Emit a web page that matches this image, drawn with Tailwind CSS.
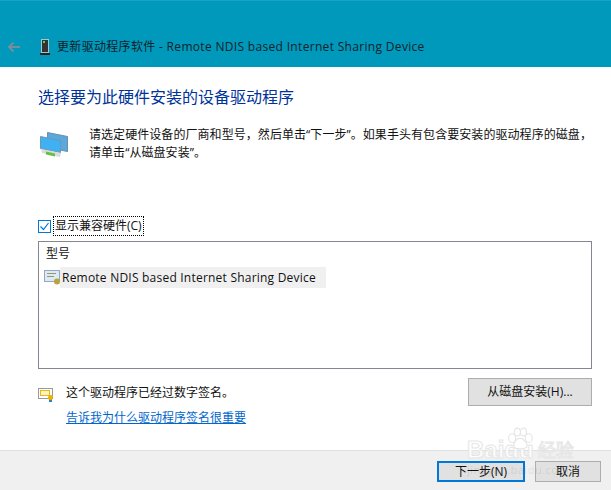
<!DOCTYPE html>
<html lang="zh-CN">
<head>
    <meta charset="UTF-8">
    <title>更新驱动程序软件</title>
    <script src="https://cdn.jsdelivr.net/npm/@tailwindcss/browser@4"></script>
</head>
<body class="bg-white overflow-hidden">
    <div class="relative w-[611px] h-[490px] flex flex-col text-[12px] leading-[16px] text-[#111] font-['Open_Sans','Noto_Sans_CJK_SC',sans-serif]">
        <!-- title bar -->
        <header class="h-[67px] bg-[#0099bc] border-t border-[#1aa3c4] flex items-end pb-[12px] pl-[7px] shrink-0">
            <svg width="14" height="12" viewBox="0 0 14 12" class="mb-[2px]">
                <path d="M13 6H2M6.5 1.5L2 6l4.5 4.5" fill="none" stroke="#72909c" stroke-width="2"/>
            </svg>
            <svg width="10" height="16" viewBox="0 0 10 16" class="ml-[19px]">
                <rect x="1" y="0" width="8" height="14" fill="#a8c4d0"/>
                <rect x="2" y="1" width="6" height="12" fill="#333"/>
                <rect x="3" y="2" width="2" height="2" fill="#3fe04a"/>
                <rect x="0" y="14" width="10" height="2" fill="#222"/>
            </svg>
            <span class="ml-[7px] text-[12px] text-[#10222a] tracking-[0.32px]">更新驱动程序软件 - Remote NDIS based Internet Sharing Device</span>
        </header>

        <main class="flex-1 flex flex-col pl-[38px] pr-[19px]">
            <h1 class="mt-[20px] text-[16px] leading-[20px] font-normal text-[#003399]">选择要为此硬件安装的设备驱动程序</h1>

            <div class="mt-[20px] flex">
                <svg width="28" height="26" viewBox="0 0 28 26" class="ml-[2px] mt-[5px] shrink-0">
                    <path d="M7.5 .5l20 4v15l-20-4z" fill="#5aa8dc" stroke="#6b8fa8"/>
                    <path d="M.5 4.5l20 4v12l-20-4z" fill="#3fb0f2" stroke="#6f97b3"/>
                    <path d="M1 17l20 4-1 4-3-.5L2 21z" fill="#d8dcda"/>
                    <path d="M6 19.5l9 2v3l-9-2z" fill="#66c043"/>
                </svg>
                <p class="ml-[21px] w-[522px] leading-[18px] mt-[-1px] tracking-[0.06px]">请选定硬件设备的厂商和型号，然后单击“下一步”。如果手头有包含要安装的驱动程序的磁盘，请单击“从磁盘安装”。</p>
            </div>

            <label class="mt-[55px] flex items-center h-[18px]">
                <span class="w-[13px] h-[13px] border border-[#0078d7] flex items-center justify-center shrink-0">
                    <svg width="11" height="11" viewBox="0 0 11 11"><path d="M1.5 5.5l3 3 5-6.5" fill="none" stroke="#0078d7" stroke-width="1.2"/></svg>
                </span>
                <span class="block ml-[3px] px-[1px] outline-1 outline-dotted outline-black text-[12px] leading-[18px]">显示兼容硬件(C)</span>
            </label>

            <section class="mt-[6px] w-[554px] h-[128px] border border-[#828790]">
                <div class="pl-[7px] pt-[4px] h-[25px] text-[12px]">型号</div>
                <div class="flex items-center pl-[5px]">
                    <svg width="16" height="15" viewBox="0 0 16 15" class="shrink-0">
                        <rect x="0.5" y="0.5" width="15" height="11" fill="#dfe8f3" stroke="#8fa9c6"/>
                        <path d="M3 3.5h9M3 6.5h7" stroke="#8f9a70"/>
                        <circle cx="13" cy="11.5" r="3" fill="#b5a53c"/>
                    </svg>
                    <span class="bg-[#f0f0f0] h-[21px] w-[266px] pl-[2px] flex items-center tracking-[0.22px]">Remote NDIS based Internet Sharing Device</span>
                </div>
            </section>

            <div class="mt-[9px] flex justify-between">
                <div class="flex">
                    <svg width="16" height="14" viewBox="0 0 16 14" class="mt-[10px] shrink-0">
                        <rect x="0.5" y="0.5" width="14" height="10" fill="#fff" stroke="#9a9a9a"/>
                        <rect x="2.5" y="2.5" width="9" height="5" fill="#fff3c4" stroke="#e8b818"/>
                        <rect x="11" y="10" width="3" height="4" fill="#2f7fd0"/>
                        <circle cx="12.5" cy="9.5" r="2.5" fill="#f0b000"/>
                    </svg>
                    <div class="ml-[12px] mt-[7px]">
                        <p>这个驱动程序已经过数字签名。</p>
                        <a class="block mt-[9px] text-[#0066cc] underline">告诉我为什么驱动程序签名很重要</a>
                    </div>
                </div>
                <button class="w-[124px] h-[28px] bg-[#e1e1e1] border border-[#adadad]">从磁盘安装(H)...</button>
            </div>
        </main>

        <footer class="h-[40px] shrink-0 bg-[#f0f0f0] border-t border-[#dfdfdf] flex justify-end items-start pt-[10px] pr-[10px] gap-[10px]">
            <button class="w-[88px] h-[21px] bg-[#e1e1e1] border-2 border-[#0078d7]">下一步(N)</button>
            <button class="w-[66px] h-[21px] bg-[#e1e1e1] border border-[#adadad]">取消</button>
        </footer>

        <!-- watermark -->
        <div class="absolute left-[467px] top-[438px] flex flex-col pointer-events-none">
            <div class="flex items-center h-[24px]">
                <span class="text-[24px] leading-[24px] text-white/80 [-webkit-text-stroke:1px_#e6e6e6] font-['Liberation_Sans',sans-serif] font-bold">Baidu</span>
                <span class="ml-[4px] text-[18px] leading-[22px] text-white/80 [-webkit-text-stroke:1px_#e6e6e6]">经验</span>
            </div>
            <span class="mt-[1px] text-[11px] leading-[13px] tracking-[0.5px] text-black/10">jingyan.baidu.com</span>
        </div>
        <svg width="28" height="28" viewBox="0 0 32 28" class="absolute left-[506px] top-[425px]" fill="#fff" stroke="#e6e6e6" stroke-width="1.3">
            <ellipse cx="7" cy="13" rx="4" ry="5"/>
            <ellipse cx="13" cy="6" rx="3.5" ry="4.5"/>
            <ellipse cx="20" cy="6" rx="3.5" ry="4.5"/>
            <ellipse cx="26" cy="13" rx="4" ry="5"/>
            <path d="M16 13c-4 0-8 6-7 10 2 3 12 3 15 0 1-4-4-10-8-10z"/>
        </svg>
    </div>
</body>
</html>
